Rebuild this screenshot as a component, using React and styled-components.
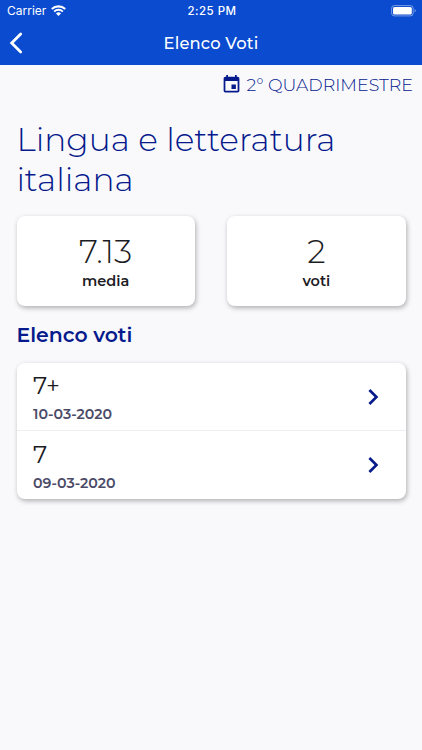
import styled, { createGlobalStyle } from "styled-components";
import { MdChevronRight, MdEvent } from "react-icons/md";

const GlobalStyle = createGlobalStyle`
  * {
    box-sizing: border-box;
    margin: 0;
    padding: 0;
  }

  body {
    font-family: "Montserrat", "Inter", sans-serif;
    background-color: #f9f9fc;
    color: #1c1c24;
  }
`;

const Screen = styled.div`
  width: 422px;
  height: 750px;
  overflow: hidden;
  background-color: #f9f9fc;
`;

const TopBar = styled.div`
  height: 65px;
  background-color: #0a4bcf;
  color: #fff;
`;

// iOS status bar: carrier, clock, battery
const StatusBar = styled.div`
  display: grid;
  grid-template-columns: 1fr auto 1fr;
  align-items: center;
  height: 21px;
  padding: 0 5px 0 7px;
  font-family: "Inter", sans-serif;
  font-size: 12px;
`;

const Carrier = styled.span`
  display: flex;
  align-items: center;
  gap: 5px;
`;

const Clock = styled.span`
  font-size: 11.5px;
  font-weight: 500;
  letter-spacing: 0.5px;
`;

const BatterySlot = styled.span`
  display: flex;
  justify-content: flex-end;
`;

const NavBar = styled.header`
  display: grid;
  grid-template-columns: 60px 1fr 60px;
  align-items: center;
  height: 43px;
`;

const BackButton = styled.button`
  display: flex;
  padding-left: 9px;
  border: none;
  background: none;
  color: inherit;
`;

const NavTitle = styled.h1`
  font-size: 16.3px;
  font-weight: 500;
  letter-spacing: 0.2px;
  text-align: center;
`;

const Period = styled.div`
  display: flex;
  justify-content: flex-end;
  align-items: center;
  gap: 4px;
  height: 38px;
  padding-right: 9px;
  color: #061a8c;
  font-size: 17.4px;
  font-weight: 300;
`;

const Content = styled.main`
  padding: 16px 16.5px 0;
`;

const Subject = styled.h2`
  color: #061a8c;
  font-size: 32.8px;
  font-weight: 300;
  line-height: 40px;
`;

const Summary = styled.div`
  display: grid;
  grid-template-columns: 1fr 1fr;
  gap: 32.5px;
  margin-top: 16.5px;
`;

const Panel = styled.div`
  background-color: #fff;
  border-radius: 8px;
  box-shadow: 1px 2px 5px rgba(0, 0, 0, 0.3);
`;

const Stat = styled(Panel)`
  display: flex;
  flex-direction: column;
  align-items: center;
  height: 90px;
  padding-top: 15.5px;
`;

const StatValue = styled.span`
  font-size: 32.6px;
  font-weight: 300;
  line-height: 40px;
`;

const StatLabel = styled.span`
  margin-top: 1px;
  font-size: 14.5px;
  font-weight: 600;
  line-height: 18px;
`;

const SectionTitle = styled.h3`
  margin: 16.5px 0 15px;
  color: #061a8c;
  font-size: 20.4px;
  font-weight: 600;
  line-height: 26px;
`;

const GradeRow = styled.li`
  display: flex;
  justify-content: space-between;
  align-items: center;
  height: 68px;
  padding: 0 16.5px;
  list-style: none;

  &:not(:last-child) {
    border-bottom: 1px solid #eeeef1;
  }
`;

const GradeInfo = styled.div`
  padding-top: 3px;
`;

const Grade = styled.div`
  font-size: 24.2px;
  font-weight: 400;
  line-height: 28px;
`;

const GradeDate = styled.div`
  margin-top: 4px;
  color: #4b4b68;
  font-size: 14.2px;
  font-weight: 600;
  line-height: 20px;
`;

const Chevron = styled(MdChevronRight)`
  color: #061a8c;
`;

const stats = [
  { value: "7.13", label: "media" },
  { value: "2", label: "voti" },
];

const grades = [
  { grade: "7+", date: "10-03-2020" },
  { grade: "7", date: "09-03-2020" },
];

function WifiIcon() {
  return (
    <svg width="15" height="11" viewBox="0 0 15 11" fill="none">
      <path d="M.8 4.1a9.5 9.5 0 0 1 13.4 0" stroke="#fff" strokeWidth="2.1" />
      <path d="M3.2 6.6a6.1 6.1 0 0 1 8.6 0" stroke="#fff" strokeWidth="2" />
      <path d="M7.5 11 5 8.5a3.6 3.6 0 0 1 5 0z" fill="#fff" />
    </svg>
  );
}

function BatteryIcon() {
  return (
    <svg width="26" height="12" viewBox="0 0 26 12" fill="none">
      <rect x="0.6" y="0.6" width="21.6" height="10.3" rx="2.8" stroke="#fff" strokeOpacity="0.45" />
      <rect x="2" y="2" width="18.8" height="7.5" rx="1.5" fill="#fff" />
      <path d="M23.7 4v3.6c1.4-.6 1.4-3 0-3.6z" fill="#fff" fillOpacity="0.5" />
    </svg>
  );
}

function App() {
  return (
    <Screen>
      <GlobalStyle />
      <TopBar>
        <StatusBar>
          <Carrier>
            Carrier
            <WifiIcon />
          </Carrier>
          <Clock>2:25 PM</Clock>
          <BatterySlot>
            <BatteryIcon />
          </BatterySlot>
        </StatusBar>
        <NavBar>
          <BackButton aria-label="Indietro">
            <svg width="14" height="22" viewBox="0 0 14 22" fill="none">
              <path
                d="M11.7 2 2.7 11l9 9"
                stroke="currentColor"
                strokeWidth="2.8"
                strokeLinecap="round"
              />
            </svg>
          </BackButton>
          <NavTitle>Elenco Voti</NavTitle>
        </NavBar>
      </TopBar>

      <Period>
        <MdEvent size={21} />
        <span>2° QUADRIMESTRE</span>
      </Period>

      <Content>
        <Subject>Lingua e letteratura italiana</Subject>
        <Summary>
          {stats.map((stat) => (
            <Stat key={stat.label}>
              <StatValue>{stat.value}</StatValue>
              <StatLabel>{stat.label}</StatLabel>
            </Stat>
          ))}
        </Summary>

        <SectionTitle>Elenco voti</SectionTitle>
        <Panel as="ul">
          {grades.map((item) => (
            <GradeRow key={item.date}>
              <GradeInfo>
                <Grade>{item.grade}</Grade>
                <GradeDate>{item.date}</GradeDate>
              </GradeInfo>
              <Chevron size={32} />
            </GradeRow>
          ))}
        </Panel>
      </Content>
    </Screen>
  );
}

export default App;
